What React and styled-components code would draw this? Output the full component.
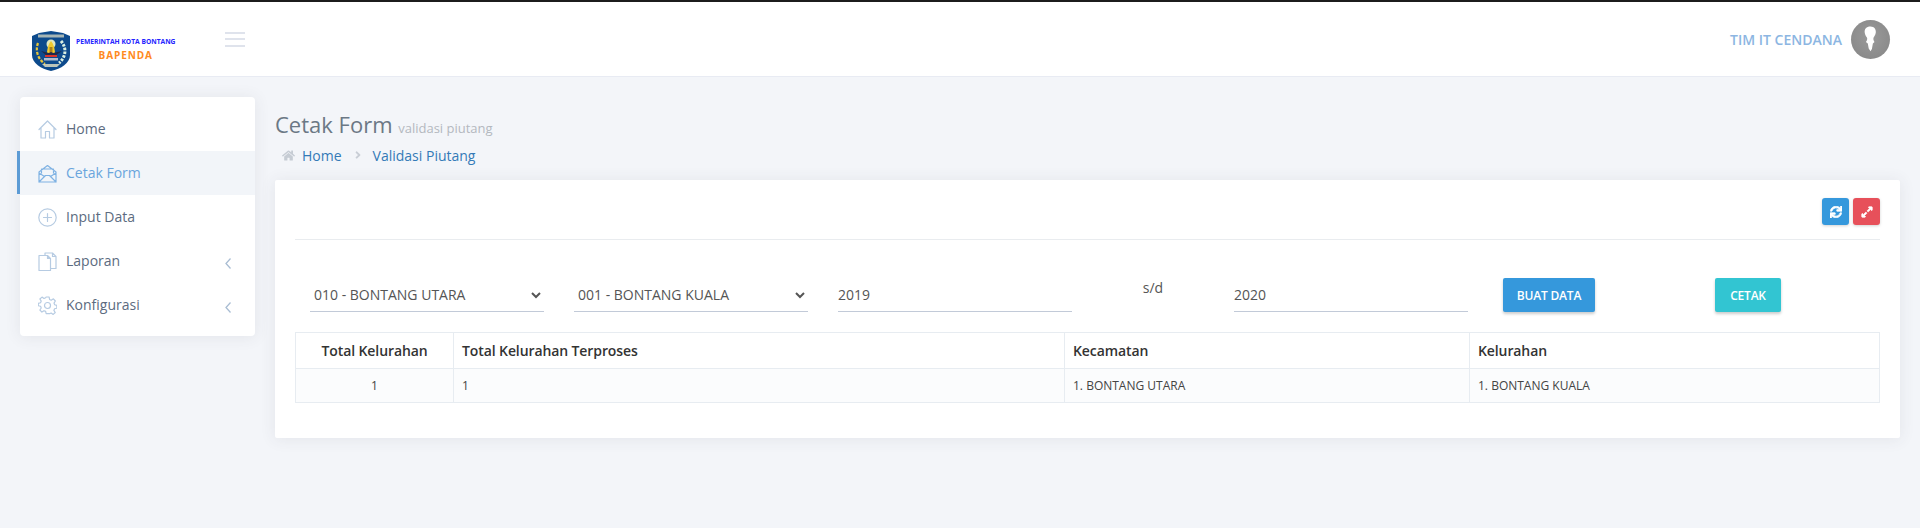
import React from "react";
import styled, { createGlobalStyle } from "styled-components";
import { FaHome, FaSync, FaExpandAlt, FaAngleRight } from "react-icons/fa";

const Global = createGlobalStyle`
  html, body { margin: 0; padding: 0; background: #f3f5f9; }
  body { font-family: "Open Sans", "Noto Sans", sans-serif; font-size: 14px; color: #575962; }
  * { box-sizing: border-box; }
`;

const Page = styled.div`
  height: 528px;
  overflow: hidden;
  border-top: 2px solid #1c1c1c;
`;
const Header = styled.header`
  height: 75px;
  background: #fff;
  border-bottom: 1px solid #e8ebf3;
  display: flex;
  align-items: center;
  padding: 0 30px 0 31px;
`;
const Brand = styled.div`
  width: 194px;
  margin-top: 24px;
  display: flex;
  align-items: center;
  gap: 5px;
`;
const BrandText = styled.div`
  display: flex;
  flex-direction: column;
  align-items: center;
  margin-bottom: 2px;
`;
const BrandTop = styled.span`
  font-size: 6.7px;
  line-height: 10px;
  font-weight: 700;
  color: #2424ff;
  white-space: nowrap;
`;
const BrandName = styled.span`
  font-size: 10px;
  line-height: 16px;
  font-weight: 700;
  letter-spacing: 0.9px;
  color: #ff8a1e;
`;
const Burger = styled.button`
  width: 20px;
  height: 15px;
  padding: 0;
  border: 0;
  background: none;
  display: flex;
  flex-direction: column;
  justify-content: space-between;
  & > i { display: block; height: 2px; background: #dfe3ec; }
`;
const User = styled.div`
  margin-left: auto;
  display: flex;
  align-items: center;
  gap: 9px;
`;
const UserName = styled.span`
  font-size: 14px;
  font-weight: 600;
  color: #8cb6e2;
  margin-top: 1px;
`;
const Avatar = styled.div`
  width: 39px;
  height: 39px;
  border-radius: 50%;
  background: radial-gradient(circle at 50% 45%, #9a9a9a, #858585);
  overflow: hidden;
`;
const Body = styled.div`
  display: flex;
  align-items: flex-start;
  padding: 20px 20px 0;
  gap: 20px;
`;
const Sidebar = styled.nav`
  width: 235px;
  flex: none;
  background: #fff;
  border-radius: 4px;
  padding: 10px 0 9px;
  box-shadow: 0 1px 15px 1px rgba(69, 65, 78, 0.08);
`;
const NavItem = styled.a`
  position: relative;
  height: 44px;
  display: flex;
  align-items: center;
  padding: 0 24px 0 18px;
  gap: 9px;
  font-size: 14px;
  color: ${(p) => (p.$active ? "#6aa5dd" : "#5c6b80")};
  background: ${(p) => (p.$active ? "#f2f5f9" : "transparent")};
  & > svg:first-child { color: ${(p) => (p.$active ? "#7fb2e3" : "#b6cbe2")}; flex: none; }
  &::before {
    content: "";
    display: ${(p) => (p.$active ? "block" : "none")};
    position: absolute;
    left: -3px;
    top: 0;
    bottom: 1px;
    width: 3px;
    background: #5c9bd5;
  }
`;
const NavLabel = styled.span`
  flex: 1;
  padding-bottom: 2px;
`;
const ArrowSvg = styled.svg`
  width: 6px;
  height: 11px;
  margin-top: 4px;
  flex: none;
  fill: none;
  stroke: #a9bdd3;
  stroke-width: 1.3;
`;
const NavArrow = () => (
  <ArrowSvg viewBox="0 0 6 11"><path d="M5.5.5 1 5.5l4.5 5" /></ArrowSvg>
);
const Main = styled.main`
  flex: 1;
  min-width: 0;
`;
const Title = styled.h1`
  margin: 13px 0 0;
  height: 28px;
  font-size: 22px;
  line-height: 28px;
  font-weight: 400;
  color: #6b7885;
  white-space: nowrap;
`;
const TitleSub = styled.small`
  font-size: 13px;
  line-height: 1;
  color: #b3b8bf;
`;
const Crumbs = styled.div`
  height: 24px;
  margin: 5px 0 13px;
  padding-left: 7px;
  display: flex;
  align-items: center;
  color: #337ab7;
  font-size: 14px;
  & > svg:first-child { color: #c6ccd4; font-size: 13px; margin-right: 7px; }
`;
const CrumbSep = styled(FaAngleRight)`
  color: #c9ced6;
  font-size: 12px;
  margin: 0 9px 0 10px;
`;
const Card = styled.section`
  height: 258px;
  background: #fff;
  border-radius: 2px;
  padding: 18px 20px 0;
  box-shadow: 0 1px 15px 1px rgba(69, 65, 78, 0.08);
`;
const CardTools = styled.div`
  height: 42px;
  border-bottom: 1px solid #e9ecef;
  display: flex;
  justify-content: flex-end;
  gap: 4px;
`;
const IconBtn = styled.button`
  width: 27px;
  height: 27px;
  border: 0;
  padding: 0;
  border-radius: 3px;
  color: #fff;
  font-size: 12px;
  display: flex;
  align-items: center;
  justify-content: center;
  background: ${(p) => p.$bg};
  box-shadow: 0 1px 3px rgba(0, 0, 0, 0.18);
  & > svg { stroke: currentColor; stroke-width: 30; }
`;
const FormRow = styled.div`
  display: grid;
  grid-template-columns: repeat(3, 264px) 132px 264px 232px 1fr;
  margin-top: 38px;
  height: 54px;
`;
const Cell = styled.div`
  padding: 0 15px;
`;
const Select = styled.select`
  width: 100%;
  height: 34px;
  border: 0;
  border-bottom: 1px solid #c2cad8;
  background: #fff;
  outline: 0;
  font: 14px "Open Sans", sans-serif;
  color: #555;
`;
const Input = styled.input`
  width: 100%;
  height: 34px;
  border: 0;
  border-bottom: 1px solid #c2cad8;
  outline: 0;
  padding: 0;
  font: 14px "Open Sans", sans-serif;
  color: #555;
`;
const Sd = styled.div`
  text-align: center;
  line-height: 20px;
  color: #555;
`;
const ActionCell = styled.div`
  padding-left: ${(p) => p.$pad}px;
`;
const ActionBtn = styled.button`
  height: 34px;
  padding: 0;
  width: ${(p) => p.$w}px;
  border: 0;
  border-radius: 2px;
  background: ${(p) => p.$bg};
  color: #fff;
  font: 600 12px "Open Sans", sans-serif;
  letter-spacing: -0.2px;
  box-shadow: 0 2px 3px rgba(0, 0, 0, 0.2);
`;
const Table = styled.table`
  width: 1584px;
  table-layout: fixed;
  border-collapse: collapse;
`;
const Th = styled.th`
  height: 36px;
  width: ${(p) => p.$w}px;
  border: 1px solid #e7ecf1;
  padding: 0 8px;
  font-size: 14px;
  font-weight: 600;
  letter-spacing: -0.1px;
  color: #333;
  text-align: ${(p) => (p.$center ? "center" : "left")};
`;
const Td = styled.td`
  height: 34px;
  border: 1px solid #e7ecf1;
  padding: 0 8px;
  font-size: 12px;
  color: #444;
  background: #fbfcfd;
  text-align: ${(p) => (p.$center ? "center" : "left")};
`;

const line = { fill: "none", stroke: "currentColor", strokeWidth: 1.2, strokeLinejoin: "round", strokeLinecap: "round" };
const HomeIcon = () => (
  <svg width="19" height="19" viewBox="0 0 19 19" {...line}>
    <path d="M1 9.5 9.5 1 18 9.5M3 8v10h4.5v-6.5h4V18H16V8" />
  </svg>
);
const MailIcon = () => (
  <svg width="19" height="19" viewBox="0 0 19 19" {...line}>
    <path d="M1 8 9.5 1.5 18 8v10H1zM1 18l6.5-6.5h4L18 18M1 9l5.5 3.5M18 9l-5.5 3.5M3.5 9V5h12v4" />
  </svg>
);
const PlusIcon = () => (
  <svg width="19" height="19" viewBox="0 0 19 19" {...line}>
    <circle cx="9.5" cy="9.5" r="8.7" />
    <path d="M9.5 5.5v8M5.5 9.5h8" />
  </svg>
);
const DocsIcon = () => (
  <svg width="19" height="19" viewBox="0 0 19 19" {...line}>
    <path d="M1 3.5h8.5l3 3v12H1zM9.5 3.5v3h3M7 3.5V1h7.5L18 4.5V16.5h-5.5M14.5 1v3.5H18" />
  </svg>
);
const GearIcon = () => (
  <svg width="19" height="19" viewBox="0 0 19 19" {...line}>
    <circle cx="9.5" cy="9.5" r="3" />
    <path d="M8 1h3l.5 2.5 1.7.8 2.2-1.4 2 2.2-1.4 2.1.7 1.7 2.2.6v3l-2.3.5-.7 1.7 1.4 2.1-2.1 2-2.1-1.4-1.6.7L11 18H8l-.5-2.3-1.7-.7-2.1 1.4-2.1-2.1L3 12.2l-.7-1.7L0 10V7.5l2.3-.6.7-1.7-1.4-2.1 2.2-2 2 1.4 1.7-.8z" transform="translate(.3 0) scale(.98)" />
  </svg>
);
const Crest = () => (
  <svg width="40" height="40" viewBox="0 0 40 40">
    <path d="M1 5 8 2 20 0 32 2 39 5V24C39 32 30 38 20 40 10 38 1 32 1 24Z" fill="#0d4a8c" />
    <path d="M7 3.5h26v3H7z" fill="#e8e3c4" opacity=".7" />
    <path d="M7 12c-3 8 0 16 7 21" fill="none" stroke="#e6c53a" strokeWidth="2.2" strokeDasharray="3 1.5" />
    <path d="M30 10c6 7 5 16-2 22" fill="none" stroke="#d9efe2" strokeWidth="3" strokeDasharray="2.5 1.3" />
    <circle cx="20" cy="13" r="4.5" fill="#dfe7c0" />
    <path d="M20 10c2 2 4 7 4 13h-8c0-6 2-11 4-13Z" fill="#f0c92e" />
    <path d="M18.5 16h3v7h-3z" fill="#a8801c" />
    <path d="M10 20l8 2 2-1 2 1 9-2-7 5H16z" fill="#1d2a4a" />
    <path d="M14 24h12v2H14z" fill="#d8342a" />
    <path d="M13 27h14v2.5H13z" fill="#aebccd" />
    <path d="M11 33h18l-3 3H14z" fill="#e8e3c4" opacity=".8" />
  </svg>
);
const Silhouette = () => (
  <svg width="39" height="39" viewBox="0 0 39 39">
    <path d="M19.5 6.5c3.8 0 5.6 2.8 5.3 6-.3 2.4-1.6 4-2.3 5.3-.4 1.6.2 3 1 4.3l-1.6 1.4-1 5.5-1.4 2.2-1.8-2.6-.9-5-1.9-1.5c1-1.4 1.6-3 1.2-4.4-1-1.5-2.2-3-2.4-5.3-.3-3.3 1.5-5.9 5.8-5.9Z" fill="#fff" />
  </svg>
);

export default function App() {
  return (
    <Page>
      <Global />
      <Header>
        <Brand>
          <Crest />
          <BrandText>
            <BrandTop>PEMERINTAH KOTA BONTANG</BrandTop>
            <BrandName>BAPENDA</BrandName>
          </BrandText>
        </Brand>
        <Burger aria-label="menu"><i /><i /><i /></Burger>
        <User>
          <UserName>TIM IT CENDANA</UserName>
          <Avatar><Silhouette /></Avatar>
        </User>
      </Header>
      <Body>
        <Sidebar>
          <NavItem><HomeIcon /><NavLabel>Home</NavLabel></NavItem>
          <NavItem $active><MailIcon /><NavLabel>Cetak Form</NavLabel></NavItem>
          <NavItem><PlusIcon /><NavLabel>Input Data</NavLabel></NavItem>
          <NavItem><DocsIcon /><NavLabel>Laporan</NavLabel><NavArrow /></NavItem>
          <NavItem><GearIcon /><NavLabel>Konfigurasi</NavLabel><NavArrow /></NavItem>
        </Sidebar>
        <Main>
          <Title>Cetak Form <TitleSub>validasi piutang</TitleSub></Title>
          <Crumbs>
            <FaHome />
            <span>Home</span>
            <CrumbSep />
            <span>Validasi Piutang</span>
          </Crumbs>
          <Card>
            <CardTools>
              <IconBtn $bg="#3598dc"><FaSync /></IconBtn>
              <IconBtn $bg="#e7505a"><FaExpandAlt /></IconBtn>
            </CardTools>
            <FormRow>
              <Cell><Select defaultValue="010"><option value="010">010 - BONTANG UTARA</option></Select></Cell>
              <Cell><Select defaultValue="001"><option value="001">001 - BONTANG KUALA</option></Select></Cell>
              <Cell><Input defaultValue="2019" /></Cell>
              <Sd>s/d</Sd>
              <Cell><Input defaultValue="2020" /></Cell>
              <ActionCell $pad={20}><ActionBtn $bg="#3598dc" $w={92}>BUAT DATA</ActionBtn></ActionCell>
              <ActionCell $pad={0}><ActionBtn $bg="#32c5d2" $w={66}>CETAK</ActionBtn></ActionCell>
            </FormRow>
            <Table>
              <thead>
                <tr>
                  <Th $w={158} $center>Total Kelurahan</Th>
                  <Th $w={611}>Total Kelurahan Terproses</Th>
                  <Th $w={405}>Kecamatan</Th>
                  <Th $w={410}>Kelurahan</Th>
                </tr>
              </thead>
              <tbody>
                <tr>
                  <Td $center>1</Td>
                  <Td>1</Td>
                  <Td>1. BONTANG UTARA</Td>
                  <Td>1. BONTANG KUALA</Td>
                </tr>
              </tbody>
            </Table>
          </Card>
        </Main>
      </Body>
    </Page>
  );
}
